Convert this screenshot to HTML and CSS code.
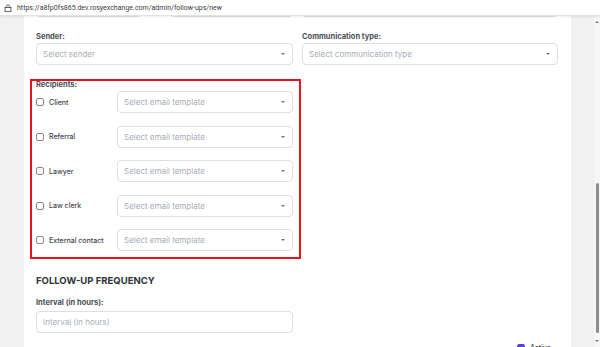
FILE: index.html
```html
<!DOCTYPE html>
<html lang="en">
<head>
    <meta charset="UTF-8">
    <meta name="viewport" content="width=device-width, initial-scale=1.0">
    <title>New follow-up</title>
    <link rel="stylesheet" href="styles.css">
</head>
<body>
    <!-- Browser address bar -->
    <div class="urlbar">
        <svg class="lock" width="8" height="8" viewBox="0 0 8 8">
            <rect x="1" y="3.5" width="6" height="4" fill="none" stroke="#555" stroke-width="0.9"/>
            <path d="M2.5 3.5V2.3a1.5 1.5 0 0 1 3 0v1.2" fill="none" stroke="#555" stroke-width="0.9"/>
        </svg>
        <span class="url">https://a8fp0fs865.dev.rosyexchange.com/admin/follow-ups/new</span>
    </div>

    <div class="viewport">
        <main class="card">
            <!-- Previous row, scrolled out of view -->
            <div class="form-row prev-row">
                <div class="pair">
                    <div class="input stub short"></div>
                    <div class="input stub"></div>
                </div>
                <div class="input stub"></div>
            </div>

            <div class="form-row">
                <div class="field">
                    <label>Sender:</label>
                    <div class="select">Select sender</div>
                </div>
                <div class="field">
                    <label>Communication type:</label>
                    <div class="select">Select communication type</div>
                </div>
            </div>

            <section class="recipients">
                <label>Recipients:</label>
                <div class="recipient-list">
                    <div class="recipient">
                        <span class="check"><span class="box"></span>Client</span>
                        <div class="select">Select email template</div>
                    </div>
                    <div class="recipient">
                        <span class="check"><span class="box"></span>Referral</span>
                        <div class="select">Select email template</div>
                    </div>
                    <div class="recipient">
                        <span class="check"><span class="box"></span>Lawyer</span>
                        <div class="select">Select email template</div>
                    </div>
                    <div class="recipient">
                        <span class="check"><span class="box"></span>Law clerk</span>
                        <div class="select">Select email template</div>
                    </div>
                    <div class="recipient">
                        <span class="check"><span class="box"></span>External contact</span>
                        <div class="select">Select email template</div>
                    </div>
                </div>
            </section>

            <h2>FOLLOW-UP FREQUENCY</h2>

            <div class="form-row">
                <div class="field">
                    <label class="interval-label">Interval (in hours):</label>
                    <div class="input">Interval (in hours)</div>
                </div>
            </div>

            <div class="active-row">
                <span class="check"><span class="box checked">
                    <svg width="6" height="6" viewBox="0 0 6 6"><path d="M1.2 3.1l1.2 1.2 2.4-2.6" fill="none" stroke="#fff" stroke-width="1"/></svg>
                </span>Active</span>
            </div>
        </main>

        <div class="gutter"></div>

        <div class="scrollbar">
            <span class="arrow up"></span>
            <div class="track"><div class="thumb"></div></div>
            <span class="arrow down"></span>
        </div>
    </div>
</body>
</html>
```

FILE: styles.css
```css
body {
    margin: 0;
    width: 600px;
    height: 347px;
    overflow: hidden;
    font-family: Inter, "Open Sans", sans-serif;
    background: #f1f1f1;
}

.urlbar {
    position: relative;
    z-index: 2;
    height: 16px;
    background: #fff;
    border-bottom: 1px solid #e2e2e2;
    box-shadow: 0 1px 2px rgba(0,0,0,0.08);
    display: flex;
    align-items: center;
    padding-left: 4px;
    box-sizing: border-box;
}
.lock {
    margin-right: 5px;
}
.url {
    font-family: Roboto, "Liberation Sans", sans-serif;
    font-size: 7px;
    color: #3c3c3c;
}

.viewport {
    display: flex;
    height: 331px;
    padding-left: 24px;
    overflow: hidden;
}
.card {
    width: 535px;
    background: #fff;
    padding-left: 12px;
    flex-shrink: 0;
}
.gutter {
    width: 23px;
    background: #f1f1f1;
}
.scrollbar {
    width: 6px;
    background: #f7f7f7;
    display: flex;
    flex-direction: column;
    align-items: center;
}
.track {
    flex: 1;
    width: 3px;
    padding-top: 155px;
}
.thumb {
    height: 150px;
    background: #8d8d8d;
    border-radius: 2px;
}
.arrow {
    width: 0;
    height: 0;
    border-left: 2px solid transparent;
    border-right: 2px solid transparent;
    margin: 5px 0;
}
.arrow.up {
    border-bottom: 2px solid #777;
}
.arrow.down {
    border-top: 2px solid #777;
}

.form-row {
    display: grid;
    grid-template-columns: 257px 256px;
    column-gap: 9px;
}
.prev-row {
    margin-top: -21px;
    margin-bottom: 15px;
}
.pair {
    display: flex;
    justify-content: space-between;
}
.pair .input {
    width: 123px;
}
.pair .short {
    width: 106px;
}

.field label,
.recipients > label {
    display: block;
    font-size: 7.5px;
    font-weight: 700;
    line-height: 10px;
    color: #4a4f57;
    margin-bottom: 1px;
}
.field .interval-label {
    margin-bottom: 3px;
}

.select,
.input {
    position: relative;
    height: 22px;
    border: 1px solid #dcdfe4;
    border-radius: 4px;
    box-sizing: border-box;
    padding-left: 6px;
    display: flex;
    align-items: center;
    font-size: 8px;
    color: #a7adb7;
}
.select:after {
    content: '';
    position: absolute;
    right: 7px;
    top: 50%;
    margin-top: -1px;
    border-left: 2.5px solid transparent;
    border-right: 2.5px solid transparent;
    border-top: 2.5px solid #6b6f75;
}

.recipients {
    margin-top: 14px;
    margin-left: -6px;
    width: 271px;
    box-sizing: border-box;
    border: 2px solid #e8141b;
    padding: 0 6px 6px 4px;
}
.recipients > label {
    line-height: 7px;
    margin-bottom: 3px;
}
.recipient-list {
    display: flex;
    flex-direction: column;
    gap: 12.5px;
}
.recipient {
    display: flex;
    align-items: center;
}
.recipient .select {
    flex: 1;
}
.check {
    display: flex;
    align-items: center;
    width: 81px;
    font-size: 7px;
    font-weight: 500;
    color: #3f444b;
}
.box {
    width: 8px;
    height: 8px;
    border: 1px solid #858a90;
    border-radius: 2px;
    box-sizing: border-box;
    margin-right: 5px;
    display: flex;
    align-items: center;
    justify-content: center;
}
.box.checked {
    background: #5b3fd6;
    border-color: #5b3fd6;
}

h2 {
    margin: 16px 0 11px;
    font-size: 9.5px;
    line-height: 12px;
    font-weight: 700;
    color: #2f3338;
}

.active-row {
    width: 522px;
    display: flex;
    justify-content: flex-end;
    margin-top: 10px;
}
.active-row .check {
    width: auto;
    padding-right: 7px;
}
```
